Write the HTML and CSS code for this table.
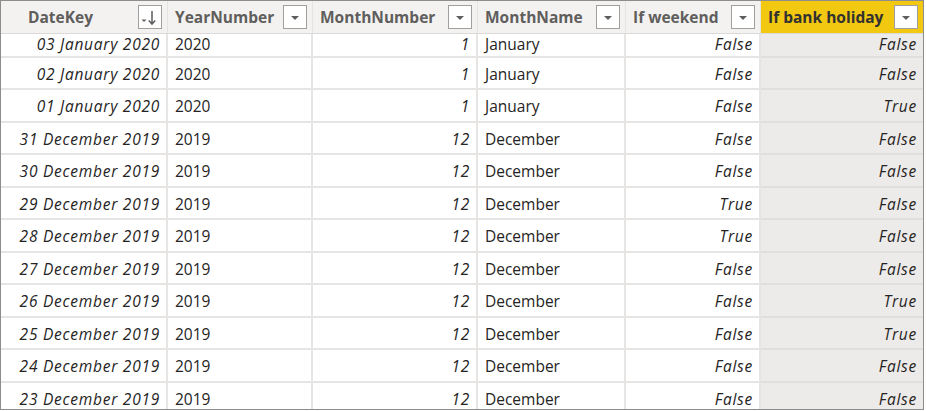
FILE: index.html
```html
<!DOCTYPE html>
<html>
<head>
<meta charset="utf-8">
<link rel="stylesheet" href="styles.css">
</head>
<body>
<div class="table">
  <div class="head">
    <div class="hcell hc-date"><span class="htext">DateKey</span>
      <span class="btn"><svg width="22" height="22" viewBox="0 0 22 22"><path d="M2.5 13.5h5l-2.5 2.5z" fill="#605e5c"/><path d="M13 5v13M9.8 14.5l3.2 3.6 3.2-3.6" stroke="#605e5c" stroke-width="1.5" fill="none"/></svg></span></div>
    <div class="hcell"><span class="htext">YearNumber</span><span class="btn"><svg width="22" height="22" viewBox="0 0 22 22"><path d="M7 10h8l-4 4z" fill="#605e5c"/></svg></span></div>
    <div class="hcell"><span class="htext">MonthNumber</span><span class="btn"><svg width="22" height="22" viewBox="0 0 22 22"><path d="M7 10h8l-4 4z" fill="#605e5c"/></svg></span></div>
    <div class="hcell"><span class="htext">MonthName</span><span class="btn"><svg width="22" height="22" viewBox="0 0 22 22"><path d="M7 10h8l-4 4z" fill="#605e5c"/></svg></span></div>
    <div class="hcell"><span class="htext">If weekend</span><span class="btn"><svg width="22" height="22" viewBox="0 0 22 22"><path d="M7 10h8l-4 4z" fill="#605e5c"/></svg></span></div>
    <div class="hcell hc-sel"><span class="htext">If bank holiday</span><span class="btn"><svg width="22" height="22" viewBox="0 0 22 22"><path d="M7 10h8l-4 4z" fill="#605e5c"/></svg></span></div>
  </div>
  <div class="body">
    <div class="row row-top"><div class="c r i">03 January 2020</div><div class="c">2020</div><div class="c r i">1</div><div class="c">January</div><div class="c r i">False</div><div class="c r i sel">False</div></div>
    <div class="row"><div class="c r i">02 January 2020</div><div class="c">2020</div><div class="c r i">1</div><div class="c">January</div><div class="c r i">False</div><div class="c r i sel">False</div></div>
    <div class="row"><div class="c r i">01 January 2020</div><div class="c">2020</div><div class="c r i">1</div><div class="c">January</div><div class="c r i">False</div><div class="c r i sel">True</div></div>
    <div class="row"><div class="c r i">31 December 2019</div><div class="c">2019</div><div class="c r i">12</div><div class="c">December</div><div class="c r i">False</div><div class="c r i sel">False</div></div>
    <div class="row"><div class="c r i">30 December 2019</div><div class="c">2019</div><div class="c r i">12</div><div class="c">December</div><div class="c r i">False</div><div class="c r i sel">False</div></div>
    <div class="row"><div class="c r i">29 December 2019</div><div class="c">2019</div><div class="c r i">12</div><div class="c">December</div><div class="c r i">True</div><div class="c r i sel">False</div></div>
    <div class="row"><div class="c r i">28 December 2019</div><div class="c">2019</div><div class="c r i">12</div><div class="c">December</div><div class="c r i">True</div><div class="c r i sel">False</div></div>
    <div class="row"><div class="c r i">27 December 2019</div><div class="c">2019</div><div class="c r i">12</div><div class="c">December</div><div class="c r i">False</div><div class="c r i sel">False</div></div>
    <div class="row"><div class="c r i">26 December 2019</div><div class="c">2019</div><div class="c r i">12</div><div class="c">December</div><div class="c r i">False</div><div class="c r i sel">True</div></div>
    <div class="row"><div class="c r i">25 December 2019</div><div class="c">2019</div><div class="c r i">12</div><div class="c">December</div><div class="c r i">False</div><div class="c r i sel">True</div></div>
    <div class="row"><div class="c r i">24 December 2019</div><div class="c">2019</div><div class="c r i">12</div><div class="c">December</div><div class="c r i">False</div><div class="c r i sel">False</div></div>
    <div class="row"><div class="c r i">23 December 2019</div><div class="c">2019</div><div class="c r i">12</div><div class="c">December</div><div class="c r i">False</div><div class="c r i sel">False</div></div>
  </div>
</div>
</body>
</html>
```
FILE: styles.css
```css
html, body { margin: 0; padding: 0; background: #ffffff; }
body { font-family: "Open Sans", "Noto Sans", sans-serif; color: #252423; }

.table {
  box-sizing: border-box;
  width: 924px;
  height: 410px;
  border: 1px solid #8f8d8b;
  display: flex;
  flex-direction: column;
  overflow: hidden;
}

.head, .row {
  display: grid;
  grid-template-columns: 167px 145px 165px 148px 135px 162px;
}

.head {
  height: 32px;
  background: #f3f2f1;
  border-bottom: 1px solid #dcdad8;
  flex: none;
}

.hcell {
  display: flex;
  align-items: center;
  justify-content: space-between;
  padding: 0 5px 0 7px;
  border-right: 1px solid #e6e4e2;
  font-weight: 700;
  font-size: 15.5px;
  color: #605e5c;
  box-sizing: border-box;
  min-width: 0;
}
.hc-date { padding-left: 27px; }
.hc-sel { background: #f2c811; color: #323130; border-right: none; }

.btn {
  box-sizing: border-box;
  width: 24px;
  height: 24px;
  background: #ffffff;
  border: 1px solid #a19f9d;
  display: flex;
  align-items: center;
  justify-content: center;
  flex: none;
}
.btn svg { display: block; }

.body { flex: 1; overflow: hidden; }

.row { height: 32.5px; }
.row.row-top { height: 23.5px; }

.c {
  box-sizing: border-box;
  display: flex;
  align-items: center;
  padding: 2px 7px 0 7px;
  font-size: 15.5px;
  line-height: 18px;
  border-right: 2px solid #e6e5e4;
  border-bottom: 2px solid #e6e5e4;
  white-space: nowrap;
  overflow: hidden;
}
.row-top .c { padding-top: 0; padding-bottom: 2px; }
.c.r { justify-content: flex-end; }
.c.i { font-style: italic; letter-spacing: 0.75px; padding-right: 6px; }
.c.sel { background: #edebe9; border-right: none; border-bottom-color: #e0dfdd; }
```
